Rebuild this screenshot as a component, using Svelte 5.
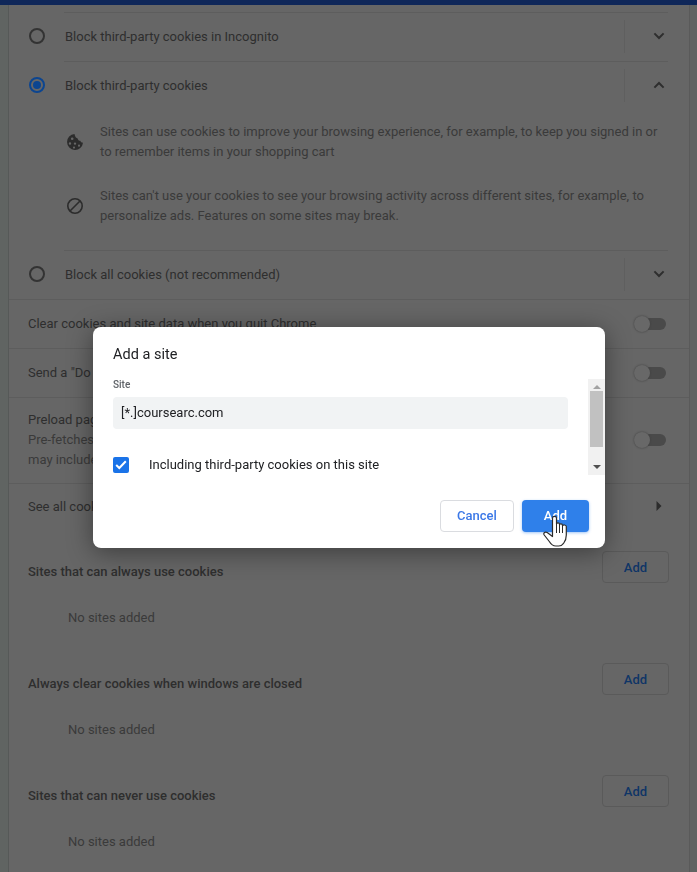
<script lang="ts">
  const sections = [
    'Sites that can always use cookies',
    'Always clear cookies when windows are closed',
    'Sites that can never use cookies'
  ]
  let thirdParty = $state(true)
  let site = $state('[*.]coursearc.com')
</script>

<div class="page">
  <div class="top-bar"></div>
  <main class="card">
    <div class="radio-group">
      <div class="radio-row">
        <span class="radio"></span>
        <span class="radio-label">Block third-party cookies in Incognito</span>
        <span class="expander">
          <svg width="12" height="8" viewBox="0 0 12 8"><path d="M1.4 1.4 6 6l4.6-4.6" /></svg>
        </span>
      </div>
      <div class="radio-row">
        <span class="radio checked"></span>
        <span class="radio-label">Block third-party cookies</span>
        <span class="expander">
          <svg width="12" height="8" viewBox="0 0 12 8"><path d="M1.4 6.6 6 2l4.6 4.6" /></svg>
        </span>
      </div>
      <div class="details">
        <div class="detail">
          <svg class="detail-icon" width="18" height="18" viewBox="0 0 18 18">
            <path
              fill-rule="evenodd"
              fill="#2c2c2c"
              d="M8.500 1a8 8 0 1 0 8.500 8.800c-1.400 0-2.400-.9-2.700-2-1.400 0-2.500-1-2.600-2.400C10.200 5.300 8.900 3.700 8.500 1ZM6.200 4.400a1.300 1.300 0 1 1 0 2.600 1.300 1.300 0 0 1 0-2.600ZM4 9.300a1.200 1.200 0 1 1 0 2.400 1.200 1.200 0 0 1 0-2.400Zm5 .1a1.200 1.200 0 1 1 0 2.400 1.200 1.200 0 0 1 0-2.400Zm4 2.200a1.100 1.100 0 1 1 0 2.200 1.100 1.100 0 0 1 0-2.200Zm-5 1.900a1.100 1.100 0 1 1 0 2.200 1.100 1.100 0 0 1 0-2.200Z"
            />
          </svg>
          <p>Sites can use cookies to improve your browsing experience, for example, to keep you signed in or to remember items in your shopping cart</p>
        </div>
        <div class="detail">
          <svg class="detail-icon" width="18" height="18" viewBox="0 0 18 18">
            <circle cx="9" cy="9" r="7.200" fill="none" stroke="#2c2c2c" stroke-width="1.600" />
            <path d="M14 4 4 14" stroke="#2c2c2c" stroke-width="1.600" />
          </svg>
          <p>Sites can't use your cookies to see your browsing activity across different sites, for example, to personalize ads. Features on some sites may break.</p>
        </div>
      </div>
      <div class="radio-row">
        <span class="radio"></span>
        <span class="radio-label">Block all cookies (not recommended)</span>
        <span class="expander">
          <svg width="12" height="8" viewBox="0 0 12 8"><path d="M1.4 1.4 6 6l4.6-4.6" /></svg>
        </span>
      </div>
    </div>

    <div class="setting">
      <span>Clear cookies and site data when you quit Chrome</span>
      <span class="toggle"></span>
    </div>
    <div class="setting">
      <span>Send a "Do Not Track" request with your browsing traffic</span>
      <span class="toggle"></span>
    </div>
    <div class="setting tall">
      <div>
        <div>Preload pages for faster browsing and searching</div>
        <div class="sub">Pre-fetches pages<br />may include cookies</div>
      </div>
      <span class="toggle"></span>
    </div>
    <div class="setting link">
      <span>See all cookies and site data</span>
      <svg width="6" height="10" viewBox="0 0 6 10"><path d="M.5 0v10L5.500 5z" fill="#2c2c2c" /></svg>
    </div>

    {#each sections as title}
      <section class="sites">
        <header>
          <h2>{title}</h2>
          <button class="add-small">Add</button>
        </header>
        <p class="empty">No sites added</p>
      </section>
    {/each}
  </main>
</div>

<div class="dialog" role="dialog" aria-label="Add a site">
  <h1>Add a site</h1>
  <div class="dialog-body">
    <div class="dialog-content">
      <label for="site">Site</label>
      <input id="site" type="text" bind:value={site} />
      <label class="check-row">
        <input type="checkbox" bind:checked={thirdParty} />
        <span class="checkbox">
          <svg width="12" height="10" viewBox="0 0 12 10"><path d="M1.200 5 4.300 8l6.500-6.800" /></svg>
        </span>
        <span>Including third-party cookies on this site</span>
      </label>
    </div>
    <div class="scrollbar">
      <span class="arrow up"></span>
      <span class="thumb"></span>
      <span class="arrow down"></span>
    </div>
  </div>
  <div class="actions">
    <button class="cancel">Cancel</button>
    <button class="add">Add</button>
  </div>
  <svg class="pointer" width="26" height="32" viewBox="0 0 26 32">
    <path
      fill="#fff"
      stroke="#2b2b2b"
      stroke-width="1.200"
      stroke-linejoin="round"
      d="M9.500 3c0-2.200 4-2.200 4 0v6c0-1.600 3-1.600 3 0v1c0-1.600 3-1.500 3 .2v.8c0-1.500 3.800-1.400 3.800.5V20c0 4-1 6-2.500 8-1 1.500-2 3-5 3h-3c-3.500 0-5-2-6.500-4.500L1.200 20c-1.200-2 1-3.800 3-2.500l5.300 4z"
    />
    <path d="M13.500 9v9M16.500 10v8M19.500 11v7" stroke="#2b2b2b" stroke-width="1" fill="none" />
  </svg>
</div>

<style>
  :global(body) {
    margin: 0;
    background: #606462;
    font-family: Roboto, 'Liberation Sans', sans-serif;
    font-size: 13px;
    color: #2e2e2e;
  }
  .page {
    height: 872px;
    overflow: hidden;
  }
  .top-bar {
    height: 5px;
    background: #0f2759;
  }
  .card {
    margin: 0 7px 0 8px;
    border-left: 1px solid #565958;
    border-right: 1px solid #5a5a5a;
    background: #666;
    height: 867px;
  }
  .radio-group {
    padding: 7px 0 0 20px;
  }
  .radio-row {
    display: flex;
    align-items: center;
    height: 49px;
    padding-bottom: 2px;
    border-top: 1px solid #5d5d5d;
    box-sizing: border-box;
    margin-left: 35px;
    margin-right: 21px;
    position: relative;
  }
  .radio {
    position: absolute;
    left: -35px;
    width: 16px;
    height: 16px;
    box-sizing: border-box;
    border: 2px solid #333;
    border-radius: 50%;
  }
  .radio.checked {
    border-color: #0c4590;
  }
  .radio.checked::after {
    content: '';
    position: absolute;
    inset: 2px;
    border-radius: 50%;
    background: #0c4590;
  }
  .radio-label {
    flex: 1;
    padding-left: 1px;
    color: #2e2e2e;
  }
  .expander {
    width: 44px;
    height: 33px;
    box-sizing: border-box;
    padding-left: 28px;
    display: flex;
    align-items: center;
    border-left: 1px solid #5f5f5f;
  }
  .expander path {
    fill: none;
    stroke: #2e2e2e;
    stroke-width: 2;
  }
  .details {
    margin-left: 35px;
    margin-right: 21px;
    height: 140px;
    box-sizing: border-box;
  }
  .detail {
    display: flex;
    align-items: center;
    height: 64px;
  }
  .detail-icon {
    margin: 0 16px 0 2px;
    flex: none;
  }
  .detail p {
    margin: 0;
    line-height: 20px;
    color: #3a3a3a;
  }
  .setting {
    display: flex;
    align-items: center;
    justify-content: space-between;
    height: 49px;
    box-sizing: border-box;
    padding: 0 23px 2px 19px;
    border-top: 1px solid #5d5d5d;
    position: relative;
  }
  .setting.tall {
    height: 86px;
    line-height: 20px;
  }
  .setting.link {
    height: 47px;
  }
  .setting.link svg {
    margin-right: 4px;
  }
  .sub {
    color: #3a3a3a;
  }
  .toggle {
    width: 28px;
    height: 12px;
    background: #4a4a4a;
    border-radius: 6px;
    position: relative;
    top: 1px;
    flex: none;
  }
  .setting.tall .toggle {
    top: 0;
  }
  .toggle::after {
    content: '';
    position: absolute;
    left: -4px;
    top: -2px;
    width: 16px;
    height: 16px;
    border-radius: 50%;
    background: #686868;
    box-shadow: 0 0 2px #3c3c3c;
  }
  .sites {
    height: 112px;
    padding: 21px 20px 0 19px;
    box-sizing: border-box;
  }
  .sites header {
    display: flex;
    align-items: center;
    justify-content: space-between;
    height: 32px;
  }
  .sites h2 {
    margin: 0;
    font-size: 13px;
    font-weight: 500;
    color: #2e2e2e;
    position: relative;
    top: 4px;
  }
  .add-small {
    width: 67px;
    height: 32px;
    border: 1px solid #5a5a5a;
    border-radius: 4px;
    background: transparent;
    color: #0f3566;
    font: 500 13px Roboto, sans-serif;
  }
  .empty {
    margin: 25px 0 0 40px;
    line-height: 20px;
    color: #3a3a3a;
  }
  .dialog {
    position: fixed;
    left: 93px;
    top: 327px;
    width: 512px;
    height: 221px;
    box-sizing: border-box;
    background: #fff;
    border-radius: 8px;
    box-shadow: 0 4px 26px rgba(0, 0, 0, 0.42);
    display: flex;
    flex-direction: column;
    color: #202124;
  }
  .dialog h1 {
    margin: 0;
    padding: 19px 20px 0;
    font-size: 14.500px;
    line-height: 17px;
    font-weight: 400;
    height: 52px;
    box-sizing: border-box;
  }
  .dialog-body {
    display: grid;
    grid-template-columns: 1fr 17px;
    height: 96px;
  }
  .dialog-content {
    padding: 0 20px;
  }
  .dialog-content > label[for='site'] {
    display: block;
    font-size: 10px;
    font-weight: 500;
    line-height: 12px;
    color: #5f6368;
    margin-bottom: 6px;
  }
  #site {
    display: block;
    width: 100%;
    height: 32px;
    box-sizing: border-box;
    border: 0;
    border-radius: 4px;
    background: #f1f3f4;
    padding: 0 8px 2px;
    font: 13px Roboto, sans-serif;
    color: #202124;
    outline: none;
  }
  .check-row {
    display: flex;
    align-items: center;
    gap: 20px;
    margin-top: 28px;
    height: 16px;
    line-height: 16px;
  }
  .check-row input {
    display: none;
  }
  .checkbox {
    width: 16px;
    height: 16px;
    border-radius: 2px;
    background: #1a73e8;
    display: flex;
    align-items: center;
    justify-content: center;
  }
  .checkbox path {
    fill: none;
    stroke: #fff;
    stroke-width: 2;
  }
  .scrollbar {
    background: #f1f1f1;
    display: flex;
    flex-direction: column;
    align-items: center;
    justify-content: space-between;
    height: 96px;
  }
  .thumb {
    width: 13px;
    height: 56px;
    background: #c1c1c1;
    margin-bottom: 17px;
  }
  .arrow {
    width: 0;
    height: 0;
    border-left: 4px solid transparent;
    border-right: 4px solid transparent;
  }
  .arrow.up {
    border-bottom: 4px solid #a3a3a3;
    margin-top: 6px;
  }
  .arrow.down {
    border-top: 4px solid #505050;
    margin-bottom: 6px;
  }
  .actions {
    display: flex;
    justify-content: flex-end;
    gap: 8px;
    padding: 25px 16px 0 0;
  }
  .actions button {
    height: 32px;
    border-radius: 4px;
    padding-bottom: 3px;
    font: 500 13px Roboto, sans-serif;
    box-sizing: border-box;
  }
  .cancel {
    width: 74px;
    background: #fff;
    border: 1px solid #dadce0;
    color: #3b78e7;
  }
  .add {
    width: 67px;
    background: #2f80ea;
    border: 0;
    color: #fff;
    box-shadow: 0 1px 3px rgba(47, 128, 234, 0.45);
  }
  .pointer {
    position: absolute;
    left: 450px;
    top: 188px;
  }
</style>
